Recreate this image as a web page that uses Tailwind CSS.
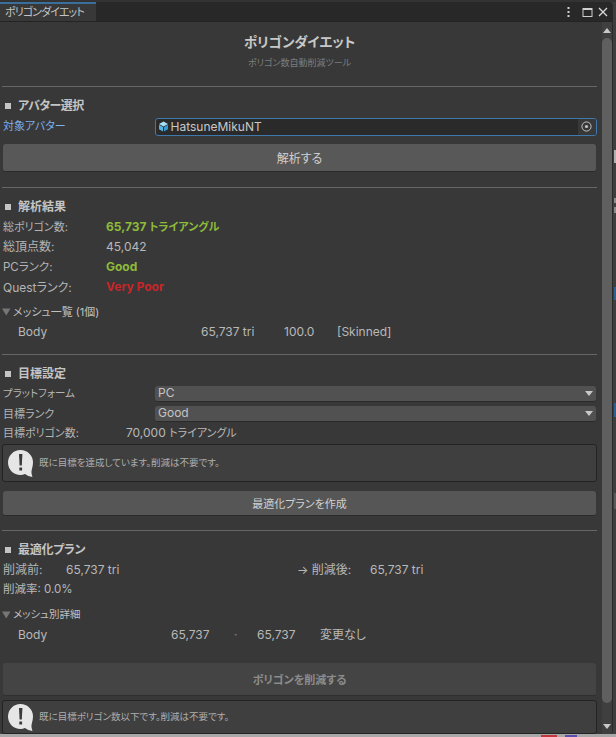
<!DOCTYPE html>
<html lang="ja">
<head>
    <meta charset="UTF-8">
    <title>ポリゴンダイエット</title>
    <script src="https://cdn.jsdelivr.net/npm/@tailwindcss/browser@4"></script>
</head>
<body class="bg-[#2a2a2a]">

<div class="w-[616px] h-[737px] overflow-hidden relative bg-[#3e3e3e] font-['Inter','Noto_Sans_CJK_JP',sans-serif] [font-feature-settings:'palt'] text-[12px] text-[#c4c4c4]">
    <div class="h-[2px] bg-[#333333]"></div>

    <!-- window -->
    <div class="w-[613px] h-[732px] flex flex-col bg-[#383838] border-r border-[#2a2a2a] rounded-b-[4px] rounded-tr-[4px] overflow-hidden">

        <!-- tab bar -->
        <div class="h-[20px] shrink-0 flex items-stretch bg-[#282828] border-b border-[#232323]">
            <div class="w-[96px] bg-[#383838] border-t-2 border-[#3a6f9c] pl-[5px] text-[11px] tracking-[-0.9px] leading-[16px] whitespace-nowrap text-[#c4c4c4]">ポリゴンダイエット</div>
            <div class="flex-1"></div>
            <div class="flex items-center pr-[4px] pt-px">
                <svg width="10" height="12" viewBox="0 0 10 12"><g fill="#d0d0d0"><rect x="3.5" y="1" width="2" height="2"/><rect x="3.5" y="5" width="2" height="2"/><rect x="3.5" y="9" width="2" height="2"/></g></svg>
                <svg class="ml-[8px]" width="11" height="11" viewBox="0 0 11 11"><rect x="1" y="1.5" width="9" height="8" fill="none" stroke="#d0d0d0"/><rect x="1" y="1" width="9" height="2" fill="#d0d0d0"/></svg>
                <svg class="ml-[5px]" width="10" height="10" viewBox="0 0 10 10"><path d="M1 1 L9 9 M9 1 L1 9" stroke="#d8d8d8" stroke-width="1.3"/></svg>
            </div>
        </div>

        <div class="flex-1 min-h-0 flex">
            <!-- content -->
            <div class="w-[602px] shrink-0 pl-[2px] pr-[5px] flex flex-col">
                <div class="h-[27px] mt-[7px] flex items-center justify-center text-[13.5px] font-bold text-[#c8c8c8]">ポリゴンダイエット</div>
                <div class="h-[14px] flex items-center justify-center text-[9px] text-[#7e7e7e]">ポリゴン数自動削減ツール</div>
                <div class="h-px mt-[16px] bg-[#666666]"></div>

                <!-- アバター選択 -->
                <div class="h-[20px] mt-[8px] pt-[2px] flex items-center pl-[3px] text-[12px] font-bold tracking-[-0.6px]"><span class="w-[6px] h-[6px] bg-[#c4c4c4] mr-[7px]"></span>アバター選択</div>
                <div class="h-[19px] mt-[2px] flex items-center">
                    <div class="w-[152.5px] pl-px text-[11px] text-[#7cb0ee]">対象アバター</div>
                    <div class="w-[442px] h-[18px] flex items-center bg-[#2a2a2a] border border-[#3f78ad] rounded-[3px] overflow-hidden">
                        <svg class="ml-[2px] mr-[2px] shrink-0" width="11" height="11" viewBox="0 0 11 11"><path d="M5.5 0.5 L10 3 L5.5 5.5 L1 3Z" fill="#a8e0f8"/><path d="M1 3.8 L5 6.1 L5 10.6 L1 8.2Z" fill="#58b4e2"/><path d="M10 3.8 L6 6.1 L6 10.6 L10 8.2Z" fill="#3c97cb"/></svg>
                        <span class="flex-1 text-[12px] text-[#c8c8c8]">HatsuneMikuNT</span>
                        <span class="w-[18px] h-full bg-[#383838] flex items-center justify-center"><svg width="11" height="11" viewBox="0 0 11 11"><circle cx="5.5" cy="5.5" r="4.6" fill="none" stroke="#c4c4c4" stroke-width="1"/><circle cx="5.5" cy="5.5" r="1.6" fill="#c4c4c4"/></svg></span>
                    </div>
                </div>
                <div class="w-[593px] h-[28px] mt-[8px] ml-px pt-[2px] flex items-center justify-center bg-[#585858] rounded-[3px] border-b border-[#2a2a2a] text-[#d0d0d0]">解析する</div>
                <div class="h-px mt-[15px] bg-[#666666]"></div>

                <!-- 解析結果 -->
                <div class="h-[20px] mt-[8px] pt-[2px] flex items-center pl-[3px] text-[12px] font-bold"><span class="w-[6px] h-[6px] bg-[#c4c4c4] mr-[7px]"></span>解析結果</div>
                <div class="h-[20px] mt-[1px] flex items-center pl-px">
                    <span class="w-[103px] text-[11px] text-[#b4b4b4]">総ポリゴン数:</span><span class="font-bold text-[#8dbb3a]">65,737 <span class="text-[11px]">トライアングル</span></span>
                </div>
                <div class="h-[20px] flex items-center pl-px">
                    <span class="w-[103px] text-[#b4b4b4]">総頂点数:</span><span class="text-[#b8b8b8]">45,042</span>
                </div>
                <div class="h-[20px] flex items-center pl-px">
                    <span class="w-[103px] pt-px text-[11.5px] text-[#b4b4b4]">PCランク:</span><span class="font-bold text-[#8dbb3a]">Good</span>
                </div>
                <div class="h-[20px] flex items-center pl-px">
                    <span class="w-[103px] pt-px text-[#b4b4b4]">Questランク:</span><span class="font-bold text-[#c8252a]">Very Poor</span>
                </div>
                <div class="h-[20px] mt-[4px] pt-[2px] flex items-center text-[11px] text-[#c0c0c0]">
                    <svg class="mr-[2px]" width="9" height="8" viewBox="0 0 9 8"><path d="M0 0.5 H8.5 L4.25 7.5Z" fill="#767676"/></svg>メッシュ一覧 (1個)
                </div>
                <div class="h-[21px] flex items-center pl-[16px] text-[#b8b8b8]">
                    <span class="w-[183px]">Body</span><span class="w-[83px]">65,737 tri</span><span class="w-[53px]">100.0</span><span>[Skinned]</span>
                </div>
                <div class="h-px mt-[12px] bg-[#666666]"></div>

                <!-- 目標設定 -->
                <div class="h-[20px] mt-[8px] pt-[2px] flex items-center pl-[3px] text-[12px] font-bold"><span class="w-[6px] h-[6px] bg-[#c4c4c4] mr-[7px]"></span>目標設定</div>
                <div class="h-[17px] mt-[2px] flex items-center">
                    <span class="w-[153px] pl-px pt-px text-[10.5px] text-[#b4b4b4]">プラットフォーム</span>
                    <div class="w-[441px] h-[16px] flex items-center justify-between bg-[#515151] rounded-[3px] border-b border-[#2a2a2a] pl-[3px] pr-[3px] text-[#c4c4c4]">PC<svg width="8" height="5" viewBox="0 0 8 5"><path d="M0 0 H8 L4 5Z" fill="#c8c8c8"/></svg></div>
                </div>
                <div class="h-[17px] mt-[3px] flex items-center">
                    <span class="w-[153px] pl-px pt-px text-[11px] text-[#b4b4b4]">目標ランク</span>
                    <div class="w-[441px] h-[16px] flex items-center justify-between bg-[#515151] rounded-[3px] border-b border-[#2a2a2a] pl-[3px] pr-[3px] text-[#c4c4c4]">Good<svg width="8" height="5" viewBox="0 0 8 5"><path d="M0 0 H8 L4 5Z" fill="#c8c8c8"/></svg></div>
                </div>
                <div class="h-[20px] mt-[1px] flex items-center pl-px">
                    <span class="w-[123px] text-[11px] text-[#b4b4b4]">目標ポリゴン数:</span><span class="text-[#b8b8b8]">70,000 <span class="text-[11px]">トライアングル</span></span>
                </div>
                <div class="w-[595px] h-[38px] mt-px flex items-center bg-[#3f3f3f] border border-[#232323] rounded-[3px]">
                    <svg class="ml-[4px] mr-[5px] shrink-0" width="27" height="29" viewBox="0 0 27 29"><path d="M13.5 1 C20.5 1 26 6.5 26 13.5 C26 18 24 21.5 24.5 24 C24.8 26 25.5 28 25.5 28 C22.5 27.5 20 26.5 18 25 C16.5 25.6 15 26 13.5 26 C6.5 26 1 20.5 1 13.5 C1 6.5 6.5 1 13.5 1Z" fill="#e6e6e6"/><path d="M12 5 H15.4 L14.8 16.5 H12.6Z" fill="#3a3a3a"/><rect x="12.3" y="18.5" width="2.8" height="3" fill="#3a3a3a"/></svg>
                    <span class="pt-px text-[9.5px] text-[#aeaeae]">既に目標を達成しています。削減は不要です。</span>
                </div>
                <div class="w-[593px] h-[25px] mt-[9px] ml-px pt-[2px] flex items-center justify-center bg-[#565656] rounded-[3px] border-b border-[#2a2a2a] text-[11px] text-[#d0d0d0]">最適化プランを作成</div>
                <div class="h-px mt-[14px] bg-[#666666]"></div>

                <!-- 最適化プラン -->
                <div class="h-[20px] mt-[8px] pt-[2px] flex items-center pl-[3px] text-[12px] font-bold tracking-[-0.3px]"><span class="w-[6px] h-[6px] bg-[#c4c4c4] mr-[7px]"></span>最適化プラン</div>
                <div class="h-[20px] mt-[1px] flex items-center pl-px text-[#b8b8b8]">
                    <span class="w-[63px] text-[#b4b4b4]">削減前:</span><span class="w-[231px]">65,737 tri</span><span class="w-[73px]">→ 削減後:</span><span>65,737 tri</span>
                </div>
                <div class="h-[20px] flex items-center pl-px text-[11.5px] text-[#b8b8b8]">削減率: 0.0%</div>
                <div class="h-[20px] mt-[4px] pt-[2px] flex items-center text-[10.5px] text-[#c0c0c0]">
                    <svg class="mr-[2px]" width="9" height="8" viewBox="0 0 9 8"><path d="M0 0.5 H8.5 L4.25 7.5Z" fill="#767676"/></svg>メッシュ別詳細
                </div>
                <div class="h-[21px] flex items-center pl-[16px] text-[#b8b8b8]">
                    <span class="w-[153px]">Body</span><span class="w-[63px]">65,737</span><span class="w-[23px] text-[#8a8a8a]">·</span><span class="w-[63px]">65,737</span><span>変更なし</span>
                </div>
                <div class="w-[593px] h-[33px] mt-[18px] ml-px pt-[2px] flex items-center justify-center bg-[#444444] rounded-[3px] border-b border-[#2e2e2e] text-[11px] font-bold text-[#8c8c8c]">ポリゴンを削減する</div>
                <div class="w-[595px] h-[34px] mt-[4px] flex items-center bg-[#3f3f3f] border border-[#232323] rounded-[3px]">
                    <svg class="ml-[4px] mr-[5px] shrink-0" width="27" height="29" viewBox="0 0 27 29"><path d="M13.5 1 C20.5 1 26 6.5 26 13.5 C26 18 24 21.5 24.5 24 C24.8 26 25.5 28 25.5 28 C22.5 27.5 20 26.5 18 25 C16.5 25.6 15 26 13.5 26 C6.5 26 1 20.5 1 13.5 C1 6.5 6.5 1 13.5 1Z" fill="#e6e6e6"/><path d="M12 5 H15.4 L14.8 16.5 H12.6Z" fill="#3a3a3a"/><rect x="12.3" y="18.5" width="2.8" height="3" fill="#3a3a3a"/></svg>
                    <span class="pt-px text-[9.5px] text-[#aeaeae]">既に目標ポリゴン数以下です。削減は不要です。</span>
                </div>
            </div>

            <!-- scrollbar -->
            <div class="w-[10px] shrink-0 bg-[#3f3f3f] flex flex-col items-center">
                <div class="h-[16px] shrink-0 flex items-center justify-center"><svg width="8" height="5" viewBox="0 0 8 5"><path d="M0 5 H8 L4 0Z" fill="#c8c8c8"/></svg></div>
                <div class="w-full flex-1 bg-[#5f5f5f] rounded-full"></div>
                <div class="h-[31px] shrink-0 flex items-end pb-[5px] justify-center"><svg width="8" height="5" viewBox="0 0 8 5"><path d="M0 0 H8 L4 5Z" fill="#c8c8c8"/></svg></div>
            </div>
        </div>
    </div>

    <!-- what shows behind the window -->
    <div class="absolute left-0 bottom-0 w-full h-[3px] bg-[#a8a8a8]"></div>
    <div class="absolute left-[541px] bottom-0 w-[16px] h-[2px] bg-[#c4343c]"></div>
    <div class="absolute left-[565px] bottom-0 w-[12px] h-[2px] bg-[#5a4fb0]"></div>
    <div class="absolute left-[614px] top-[150px] w-[2px] h-[13px] bg-[#b0b0b0]"></div>
    <div class="absolute left-[614px] top-[198px] w-[2px] h-[5px] bg-[#8a8a8a]"></div>
    <div class="absolute left-[614px] top-[207px] w-[2px] h-[6px] bg-[#8a8a8a]"></div>
    <div class="absolute left-[614px] top-[287px] w-[2px] h-[13px] bg-[#2f5f8f]"></div>
    <div class="absolute left-[614px] top-[403px] w-[2px] h-[14px] bg-[#2f5f8f]"></div>
    <div class="absolute left-[614px] top-[493px] w-[2px] h-[16px] bg-[#5a5a5a]"></div>
</div>

</body>
</html>
